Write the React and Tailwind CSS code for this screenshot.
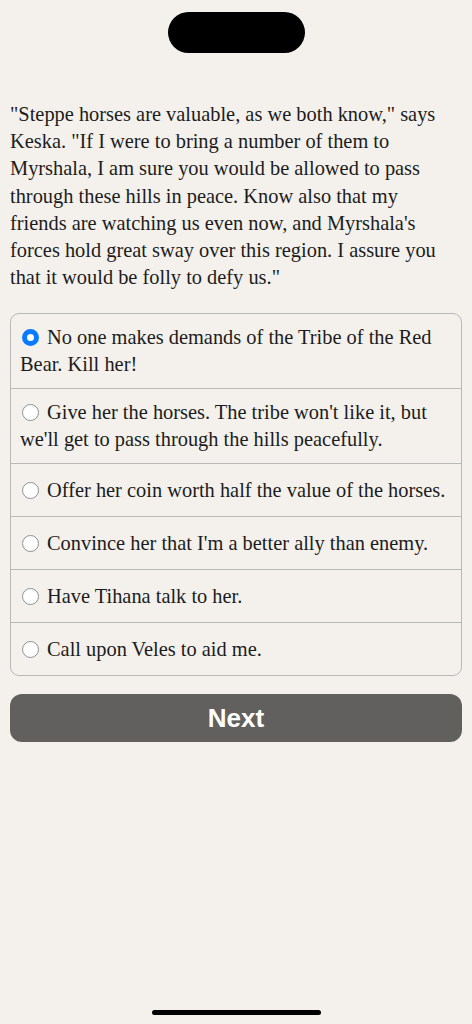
import { useState } from 'react'

const PASSAGE =
    '"Steppe horses are valuable, as we both know," says Keska. "If I were to bring a number of them to Myrshala, I am sure you would be allowed to pass through these hills in peace. Know also that my friends are watching us even now, and Myrshala\'s forces hold great sway over this region. I assure you that it would be folly to defy us."'

const CHOICES = [
    'No one makes demands of the Tribe of the Red Bear. Kill her!',
    "Give her the horses. The tribe won't like it, but we'll get to pass through the hills peacefully.",
    'Offer her coin worth half the value of the horses.',
    "Convince her that I'm a better ally than enemy.",
    'Have Tihana talk to her.',
    'Call upon Veles to aid me.',
]

function Radio({ checked }) {
    return checked ? (
        <span className="inline-block w-[17px] h-[17px] rounded-full bg-white border-[5px] border-[#0a7aff] align-[-2px] ml-[2px] mr-[8px]" />
    ) : (
        <span className="inline-block w-[17px] h-[17px] rounded-full bg-white border-[1.5px] border-[#8e8e93] align-[-2px] ml-[2px] mr-[8px]" />
    )
}

export default function App() {
    const [selected, setSelected] = useState(0)

    return (
        <div
            className="relative min-h-[1024px] bg-[#f4f1ed] text-[#1c1c1c]"
            style={{ fontFamily: '"Liberation Serif", "Times New Roman", serif' }}
        >
            {/* Top pill */}
            <div className="flex justify-center pt-[12px]">
                <div className="w-[137px] h-[41px] rounded-full bg-black" />
            </div>

            <div className="px-[10px]">
                {/* Passage */}
                <p className="mt-[48px] max-w-[436px] text-[20.4px] leading-[27.2px]">{PASSAGE}</p>

                {/* Choices */}
                <div className="mt-[22px] border border-[#b9b9b9] rounded-[9px] overflow-hidden">
                    {CHOICES.map((c, i) => (
                        <div
                            key={i}
                            onClick={() => setSelected(i)}
                            className={
                                'flex items-center min-h-[53px] py-[10px] px-[9px] cursor-pointer ' +
                                (i > 0 ? 'border-t border-[#b9b9b9]' : '')
                            }
                        >
                            <p className="text-[20.4px] leading-[27px]">
                                <Radio checked={selected === i} />
                                {c}
                            </p>
                        </div>
                    ))}
                </div>

                {/* Next button */}
                <button
                    className="mt-[18px] w-full h-[48px] rounded-[12px] bg-[#61605e] text-white text-[26px] font-bold flex items-center justify-center"
                    style={{ fontFamily: '"Liberation Sans", Arial, sans-serif' }}
                >
                    Next
                </button>
            </div>

            {/* Home indicator */}
            <div className="absolute bottom-[9px] left-0 right-0 flex justify-center">
                <div className="w-[169px] h-[5px] rounded-full bg-black" />
            </div>
        </div>
    )
}
